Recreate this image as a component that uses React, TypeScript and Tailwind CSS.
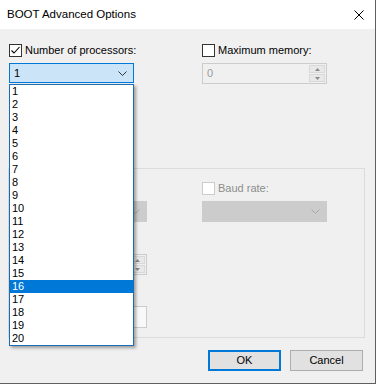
import React from 'react';

const font = { fontFamily: '"Liberation Sans", Arial, sans-serif' };

function Check({ checked = false, disabled = false }: { checked?: boolean; disabled?: boolean }) {
  return (
    <span
      className={`flex h-[13px] w-[13px] shrink-0 items-center justify-center border bg-white ${
        disabled ? 'border-[#cccccc]' : 'border-[#333333]'
      }`}
    >
      {checked && (
        <svg width="11" height="11" viewBox="0 0 11 11">
          <path d="M1.5 5.5 L4 8 L9.5 2" fill="none" stroke="#000" strokeWidth="1.1" />
        </svg>
      )}
    </span>
  );
}

function CheckLabel({ label, checked, disabled }: { label: string; checked?: boolean; disabled?: boolean }) {
  return (
    <div className="flex h-[13px] items-center gap-[3px]">
      <Check checked={checked} disabled={disabled} />
      <span className={`text-[11px] leading-none ${disabled ? 'text-[#8d8d8d]' : 'text-black'}`}>{label}</span>
    </div>
  );
}

function Chevron({ color }: { color: string }) {
  return (
    <svg width="9" height="5" viewBox="0 0 9 5">
      <path d="M0.5 0.5 L4.5 4.5 L8.5 0.5" fill="none" stroke={color} strokeWidth="1" />
    </svg>
  );
}

function DisabledCombo() {
  return (
    <div className="flex h-[21px] w-[125px] items-center justify-end border border-[#cccccc] bg-[#cccccc] pr-[6px]">
      <Chevron color="#a8a8a8" />
    </div>
  );
}

function Spin({ value }: { value?: string }) {
  return (
    <div className="flex h-[21px] w-[125px] items-center border border-[#cccccc] bg-[#f0f0f0]">
      <span className="flex-1 pl-[4px] text-[11px] text-[#9a9a9a]">{value}</span>
      <div className="mr-[1px] flex h-[17px] w-[16px] flex-col gap-[1px]">
        <div className="flex flex-1 items-center justify-center border border-[#d9d9d9] bg-[#e8e8e8]">
          <svg width="5" height="3" viewBox="0 0 5 3">
            <path d="M0 3 L2.5 0 L5 3 Z" fill="#8a8a8a" />
          </svg>
        </div>
        <div className="flex flex-1 items-center justify-center border border-[#d9d9d9] bg-[#e8e8e8]">
          <svg width="5" height="3" viewBox="0 0 5 3">
            <path d="M0 0 L2.5 3 L5 0 Z" fill="#8a8a8a" />
          </svg>
        </div>
      </div>
    </div>
  );
}

export default function App() {
  const items = Array.from({ length: 20 }, (_, i) => String(i + 1));

  return (
    <div className="relative flex h-[384px] w-[376px] flex-col border-r border-b border-[#5f5f5f] bg-[#f0f0f0]" style={font}>
      {/* タイトルバー */}
      <div className="flex h-[29px] shrink-0 items-center justify-between bg-white pl-[7px] pr-[11px]">
        <span className="text-[11.5px] text-black">BOOT Advanced Options</span>
        <svg width="10" height="10" viewBox="0 0 10 10">
          <path d="M0.5 0.5 L9.5 9.5 M9.5 0.5 L0.5 9.5" stroke="#000" strokeWidth="1" />
        </svg>
      </div>

      {/* 本体 */}
      <div className="flex flex-1 flex-col pl-[9px] pt-[15px]">
        <div className="grid grid-cols-[193px_125px]">
          <div className="flex flex-col gap-[6px]">
            <CheckLabel label="Number of processors:" checked />
            <div className="flex h-[20px] w-[125px] items-center justify-between border border-[#0078d7] bg-[#cce4f7] pl-[4px] pr-[6px]">
              <span className="text-[11px] text-black">1</span>
              <Chevron color="#333333" />
            </div>
          </div>
          <div className="flex flex-col gap-[6px]">
            <CheckLabel label="Maximum memory:" />
            <Spin value="0" />
          </div>
        </div>

        <div className="mt-[14px] flex flex-col gap-[10px]">
          <CheckLabel label="PCI Lock" />
          <CheckLabel label="Debug" />
        </div>

        {/* グループボックス */}
        <div className="relative ml-[-1px] mt-[34px] h-[170px] w-[357px] border border-[#dcdcdc] pl-[13px] pt-[13px]">
          <span className="absolute left-[5px] top-[-7px] bg-[#f0f0f0] px-[2px] text-[11px] leading-none text-[#8d8d8d]">
            Global debug settings
          </span>
          <div className="grid grid-cols-[180px_125px]">
            <div className="flex flex-col">
              <CheckLabel label="Debug port:" disabled />
              <div className="mt-[6px]">
                <DisabledCombo />
              </div>
              <div className="mt-[13px]">
                <CheckLabel label="Channel:" disabled />
              </div>
              <div className="mt-[6px]">
                <Spin />
              </div>
              <div className="mt-[13px]">
                <CheckLabel label="USB target name:" disabled />
              </div>
              <div className="mt-[5px] h-[22px] w-[125px] border border-[#cccccc] bg-[#f9f9f9]" />
            </div>
            <div className="flex flex-col">
              <CheckLabel label="Baud rate:" disabled />
              <div className="mt-[6px]">
                <DisabledCombo />
              </div>
            </div>
          </div>
        </div>

        <div className="mt-[12px] flex justify-end gap-[9px] pr-[12px]">
          <button className="h-[21px] w-[73px] border-2 border-[#0078d7] bg-[#e1e1e1] text-[11px] text-black">OK</button>
          <button className="h-[21px] w-[73px] border border-[#adadad] bg-[#e1e1e1] text-[11px] text-black">Cancel</button>
        </div>
      </div>

      {/* ドロップダウンリスト */}
      <div className="absolute left-[9px] top-[84px] w-[125px] border border-[#1c6bb3] bg-white shadow-[2px_2px_3px_rgba(0,0,0,0.35)]">
        {items.map((n) => (
          <div
            key={n}
            className={`flex h-[13px] items-center pl-[2px] text-[11px] leading-none ${
              n === '16' ? 'bg-[#0078d7] text-white' : 'text-black'
            }`}
          >
            {n}
          </div>
        ))}
      </div>
    </div>
  );
}
